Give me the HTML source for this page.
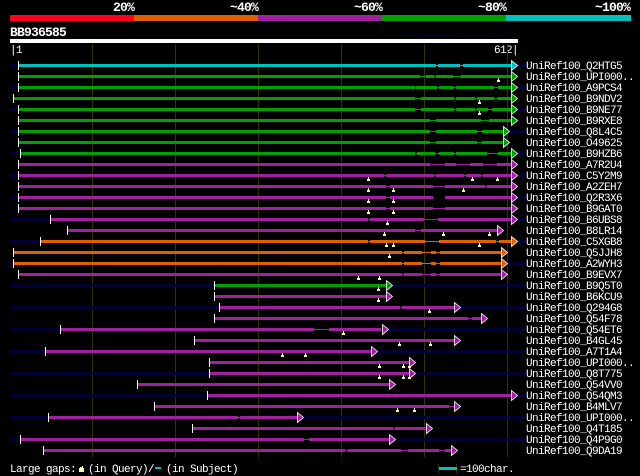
<!DOCTYPE html>
<html><head><meta charset="utf-8"><style>
html,body{margin:0;padding:0;background:#000}
svg{display:block}
text{font-family:"Liberation Mono",monospace;font-size:11px;letter-spacing:-.6px;fill:#fff}
.b{font-weight:bold;font-size:13px;letter-spacing:-.8px}
path{fill:none;shape-rendering:crispEdges}
.t{stroke-width:1}
.w{stroke-width:3}
.C{stroke:#00c0c0;fill:#00c0c0}
.G{stroke:#00a000;fill:#00a000}
.P{stroke:#a020a0;fill:#a020a0}
.O{stroke:#e06000;fill:#e06000}
#a{stroke:#fff;stroke-width:.8;shape-rendering:auto}
</style></head><body>
<svg xmlns="http://www.w3.org/2000/svg" width="640" height="476" viewBox="0 0 640 476">
<defs>
<polygon id="a" points="0.5,-4.5 6.5,0.5 0.5,5.5"/>
<path id="m" style="fill:#ffff99" d="M0 0h1v2h1v2h-3v-2h1z"/>
</defs>
<rect width="640" height="476" fill="#000"/>
<text class="b" x="113" y="11">20%</text><text class="b" x="230" y="11">~40%</text><text class="b" x="354" y="11">~60%</text><text class="b" x="478" y="11">~80%</text><text class="b" x="595" y="11">~100%</text>
<rect x="10" y="15" width="124" height="6" fill="#ff0022"/><rect x="134" y="15" width="124" height="6" fill="#e06000"/><rect x="258" y="15" width="124" height="6" fill="#a020a0"/><rect x="382" y="15" width="124" height="6" fill="#00a000"/><rect x="506" y="15" width="125" height="6" fill="#00c0c0"/>
<text class="b" x="10" y="36">BB936585</text>
<text x="402" y="38" style="font-size:8.33px;letter-spacing:0;fill:#000033">AlignView.pm Beta rel.7</text>
<rect x="10" y="39" width="508" height="4" fill="#fff"/>
<text x="10" y="53">|1</text><text x="494" y="53">612|</text>
<path stroke="#333300" d="M92.5 44V457M175.5 44V457M258.5 44V457M341.5 44V457M424.5 44V457M507.5 44V457"/>
<path class="w" stroke="#000033" d="M10 65.5H18M517 65.5H526M10 87.5H18M517 87.5H526M10 109.5H18M517 109.5H526M10 131.5H18M509 131.5H526M10 153.5H20M517 153.5H526M10 175.5H18M517 175.5H526M10 197.5H18M517 197.5H526M10 219.5H50M517 219.5H526M10 241.5H40M517 241.5H526M10 263.5H13M507 263.5H526M10 285.5H214M392 285.5H526M10 307.5H219M460 307.5H526M10 329.5H60M388 329.5H526M10 351.5H45M377 351.5H526M10 373.5H209M415 373.5H526M10 395.5H207M517 395.5H526M10 417.5H48M303 417.5H526M10 439.5H20M395 439.5H526"/>
<g class="C"><path class="t" d="M19 65.5H511"/><path class="w" d="M19 65.5H436M438 65.5H460M463 65.5H511"/><use href="#a" x="511" y="65"/></g>
<g class="G">
<path class="t" d="M19 76.5H511M19 87.5H511M14 98.5H511M19 109.5H511M19 120.5H511M19 131.5H503M19 142.5H503M21 153.5H511M215 285.5H386"/>
<path class="w" d="M19 76.5H420M426 76.5H434M436 76.5H453M461 76.5H511M19 87.5H415M416 87.5H437M439 87.5H454M456 87.5H494M498 87.5H511M14 98.5H415M421 98.5H454M456 98.5H475M477 98.5H494M498 98.5H511M19 109.5H415M421 109.5H454M456 109.5H475M477 109.5H488M492 109.5H511M19 120.5H430M436 120.5H481M489 120.5H511M19 131.5H430M436 131.5H477M482 131.5H503M19 142.5H430M436 142.5H477M482 142.5H503M21 153.5H415M417 153.5H435M439 153.5H454M456 153.5H487M498 153.5H511M215 285.5H386"/>
<use href="#a" x="511" y="76"/><use href="#a" x="511" y="87"/><use href="#a" x="511" y="98"/><use href="#a" x="511" y="109"/><use href="#a" x="511" y="120"/><use href="#a" x="503" y="131"/><use href="#a" x="503" y="142"/><use href="#a" x="511" y="153"/><use href="#a" x="386" y="285"/>
</g>
<g class="P">
<path class="t" d="M19 164.5H511M19 175.5H511M19 186.5H511M386 197.5H390M19 208.5H511M51 219.5H511M68 230.5H497M19 274.5H501M215 296.5H386M220 307.5H454M215 318.5H481M61 329.5H381M195 340.5H454M46 351.5H371M210 362.5H409M210 373.5H409M138 384.5H389M208 395.5H511M155 406.5H454M49 417.5H297M193 428.5H426M21 439.5H389M44 450.5H451"/>
<path class="w" d="M19 164.5H430M445 164.5H456M470 164.5H483M497 164.5H511M19 175.5H384M386 175.5H434M436 175.5H464M466 175.5H481M483 175.5H511M19 186.5H386M390 186.5H433M445 186.5H485M487 186.5H511M19 197.5H386M390 197.5H433M445 197.5H511M19 208.5H386M390 208.5H433M445 208.5H511M51 219.5H368M370 219.5H424M438 219.5H511M68 230.5H415M421 230.5H497M19 274.5H402M404 274.5H422M431 274.5H436M440 274.5H501M215 296.5H386M220 307.5H400M402 307.5H454M215 318.5H468M472 318.5H481M61 329.5H314M329 329.5H381M195 340.5H454M46 351.5H371M210 362.5H409M210 373.5H409M138 384.5H389M208 395.5H511M155 406.5H449M49 417.5H238M240 417.5H297M193 428.5H393M395 428.5H426M21 439.5H304M309 439.5H389M44 450.5H345M348 450.5H401M408 450.5H439M445 450.5H451"/>
<use href="#a" x="511" y="164"/><use href="#a" x="511" y="175"/><use href="#a" x="511" y="186"/><use href="#a" x="511" y="197"/><use href="#a" x="511" y="208"/><use href="#a" x="511" y="219"/><use href="#a" x="497" y="230"/><use href="#a" x="501" y="274"/><use href="#a" x="386" y="296"/><use href="#a" x="454" y="307"/><use href="#a" x="481" y="318"/><use href="#a" x="382" y="329"/><use href="#a" x="454" y="340"/><use href="#a" x="371" y="351"/><use href="#a" x="409" y="362"/><use href="#a" x="409" y="373"/><use href="#a" x="389" y="384"/><use href="#a" x="511" y="395"/><use href="#a" x="454" y="406"/><use href="#a" x="297" y="417"/><use href="#a" x="426" y="428"/><use href="#a" x="389" y="439"/><use href="#a" x="451" y="450"/>
</g>
<g class="O">
<path class="t" d="M41 241.5H511M14 252.5H501M14 263.5H501"/>
<path class="w" d="M41 241.5H368M370 241.5H425M439 241.5H496M499 241.5H511M14 252.5H402M404 252.5H422M431 252.5H436M440 252.5H501M14 263.5H402M404 263.5H422M431 263.5H436M440 263.5H501"/>
<use href="#a" x="511" y="241"/><use href="#a" x="501" y="252"/><use href="#a" x="501" y="263"/>
</g>
<path stroke="#fff" d="M18.5 61V70M18.5 72V81M18.5 83V92M13.5 94V103M18.5 105V114M18.5 116V125M18.5 127V136M18.5 138V147M20.5 149V158M18.5 160V169M18.5 171V180M18.5 182V191M18.5 193V202M18.5 204V213M50.5 215V224M67.5 226V235M40.5 237V246M13.5 248V257M13.5 259V268M18.5 270V279M214.5 281V290M214.5 292V301M219.5 303V312M214.5 314V323M60.5 325V334M194.5 336V345M45.5 347V356M209.5 358V367M209.5 369V378M137.5 380V389M207.5 391V400M154.5 402V411M48.5 413V422M192.5 424V433M20.5 435V444M43.5 446V455"/>
<g transform="translate(0,-1)">
<use href="#m" x="498" y="79"/><use href="#m" x="479" y="101"/><use href="#m" x="479" y="112"/>
<use href="#m" x="368" y="178"/><use href="#m" x="472" y="178"/><use href="#m" x="497" y="178"/>
<use href="#m" x="368" y="189"/><use href="#m" x="393" y="189"/><use href="#m" x="463" y="189"/>
<use href="#m" x="368" y="200"/><use href="#m" x="393" y="200"/>
<use href="#m" x="368" y="211"/><use href="#m" x="393" y="211"/>
<use href="#m" x="387" y="222"/>
<use href="#m" x="384" y="233"/><use href="#m" x="443" y="233"/><use href="#m" x="489" y="233"/>
<use href="#m" x="386" y="244"/><use href="#m" x="393" y="244"/><use href="#m" x="479" y="244"/>
<use href="#m" x="389" y="255"/>
<use href="#m" x="358" y="277"/><use href="#m" x="379" y="277"/>
<use href="#m" x="378" y="288"/><use href="#m" x="378" y="299"/>
<use href="#m" x="429" y="310"/>
<use href="#m" x="343" y="332"/>
<use href="#m" x="399" y="343"/><use href="#m" x="430" y="343"/>
<use href="#m" x="282" y="354"/><use href="#m" x="305" y="354"/>
<use href="#m" x="379" y="365"/><use href="#m" x="403" y="365"/><use href="#m" x="409" y="365"/>
<use href="#m" x="379" y="376"/><use href="#m" x="403" y="376"/><use href="#m" x="409" y="376"/>
<use href="#m" x="397" y="409"/><use href="#m" x="414" y="409"/>
</g>
<text x="526" y="69">UniRef100_Q2HTG5</text>
<text x="526" y="80">UniRef100_UPI000..</text>
<text x="526" y="91">UniRef100_A9PCS4</text>
<text x="526" y="102">UniRef100_B9NDV2</text>
<text x="526" y="113">UniRef100_B9NE77</text>
<text x="526" y="124">UniRef100_B9RXE8</text>
<text x="526" y="135">UniRef100_Q8L4C5</text>
<text x="526" y="146">UniRef100_O49625</text>
<text x="526" y="157">UniRef100_B9HZB6</text>
<text x="526" y="168">UniRef100_A7R2U4</text>
<text x="526" y="179">UniRef100_C5Y2M9</text>
<text x="526" y="190">UniRef100_A2ZEH7</text>
<text x="526" y="201">UniRef100_Q2R3X6</text>
<text x="526" y="212">UniRef100_B9GAT0</text>
<text x="526" y="223">UniRef100_B6UBS8</text>
<text x="526" y="234">UniRef100_B8LR14</text>
<text x="526" y="245">UniRef100_C5XGB8</text>
<text x="526" y="256">UniRef100_Q5JJH8</text>
<text x="526" y="267">UniRef100_A2WYH3</text>
<text x="526" y="278">UniRef100_B9EVX7</text>
<text x="526" y="289">UniRef100_B9Q5T0</text>
<text x="526" y="300">UniRef100_B6KCU9</text>
<text x="526" y="311">UniRef100_Q294G8</text>
<text x="526" y="322">UniRef100_Q54F78</text>
<text x="526" y="333">UniRef100_Q54ET6</text>
<text x="526" y="344">UniRef100_B4GL45</text>
<text x="526" y="355">UniRef100_A7T1A4</text>
<text x="526" y="366">UniRef100_UPI000..</text>
<text x="526" y="377">UniRef100_Q8T775</text>
<text x="526" y="388">UniRef100_Q54VV0</text>
<text x="526" y="399">UniRef100_Q54QM3</text>
<text x="526" y="410">UniRef100_B4MLV7</text>
<text x="526" y="421">UniRef100_UPI000..</text>
<text x="526" y="432">UniRef100_Q4T185</text>
<text x="526" y="443">UniRef100_Q4P9G0</text>
<text x="526" y="454">UniRef100_Q9DA19</text>
<text x="10" y="472">Large gaps:</text>
<path style="fill:#ffff99" d="M82 466h1v2h1v4h-5v-4h1v-1h2z"/>
<text x="88" y="472">(in Query)/</text>
<rect x="155" y="467" width="6" height="2" fill="#00c0c0"/>
<text x="166" y="472">(in Subject)</text>
<path stroke="#333300" d="M438.5 464V473M456.5 464V473"/>
<rect x="439" y="467" width="18" height="3" fill="#00c0c0"/>
<text x="460" y="472">=100char.</text>
</svg>
</body></html>
